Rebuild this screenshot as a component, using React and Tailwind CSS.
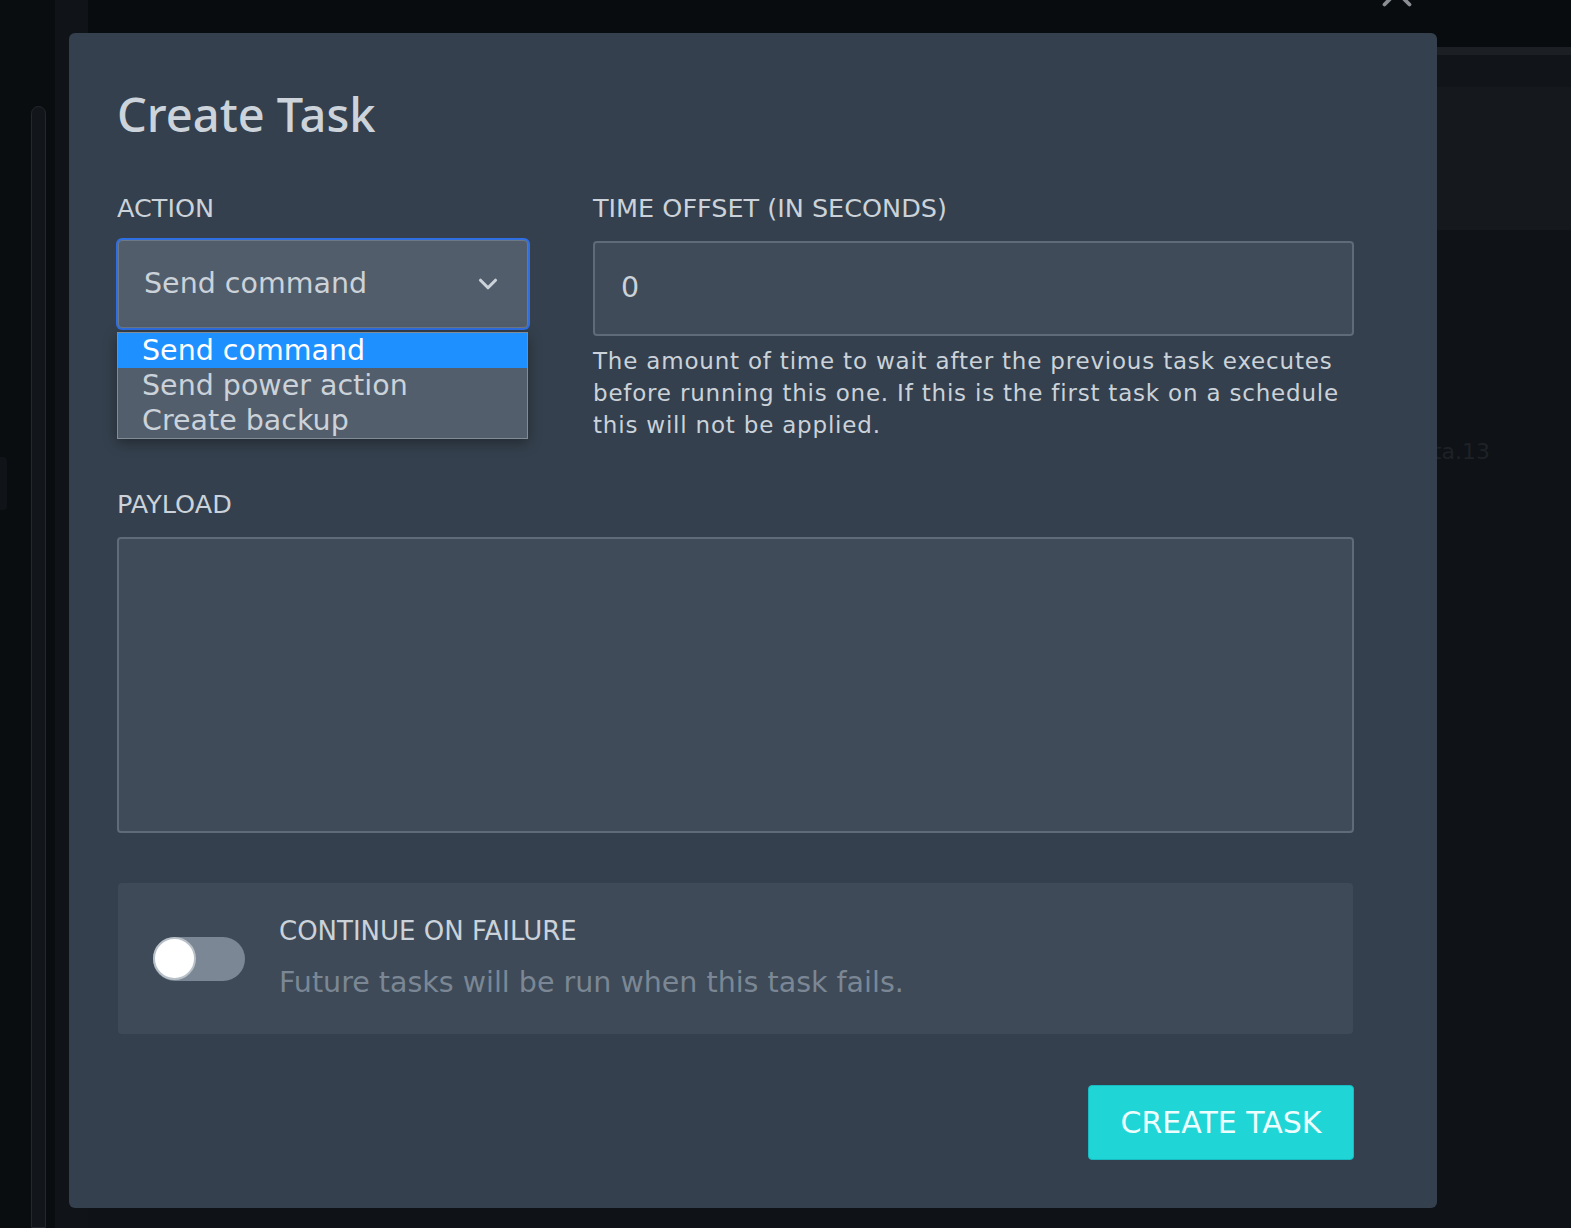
import React from 'react';
import { ChevronDown, X } from 'lucide-react';

const actions = ['Send command', 'Send power action', 'Create backup'];

const helpLines = [
  'The amount of time to wait after the previous task executes',
  'before running this one. If this is the first task on a schedule',
  'this will not be applied.',
];

const Label = ({ children }) => (
  <div className="h-[24px] text-[25.5px] leading-[24px] uppercase text-[#cbd2d9]">{children}</div>
);

export default function App() {
  return (
    <div className="relative h-[1228px] w-full overflow-hidden bg-[#0a0d10] font-['DejaVu_Sans',sans-serif]">
      {/* page behind the modal */}
      <div className="flex h-full">
        <div className="flex w-[55px] shrink-0">
          <div className="w-[7px] shrink-0 pt-[457px]">
            <div className="h-[53px] rounded-r-[4px] bg-[#101317]" />
          </div>
          <div className="ml-[24px] w-[15px] shrink-0 pt-[106px]">
            <div className="h-full rounded-t-full border border-[#24282d] bg-[#121519]" />
          </div>
        </div>
        <div className="w-[33px] shrink-0 bg-[#101317]" />
        <div className="flex flex-1 flex-col">
          <div className="h-[47px] bg-[#090c0f]" />
          <div className="h-[8px] bg-[#1c2025]" />
          <div className="h-[32px] bg-[#111418]" />
          <div className="h-[143px] bg-[#15181c]" />
          <div className="flex-1 bg-[#0f1216] pr-[81px] pt-[205px] text-right text-[22px] text-[#1e2227]">
            1.0.0-beta.13
          </div>
        </div>
      </div>

      {/* modal */}
      <div className="absolute left-[69px] top-[33px] flex h-[1175px] w-[1368px] flex-col rounded-[6px] bg-[#34404d] pl-[48px] pr-[83px] pt-[57px]">
        <button className="absolute -top-[66px] right-[15px] text-[#8a8f94]">
          <X size={50} strokeWidth={1.8} />
        </button>

        <h2 className="h-[48px] font-['Noto_Sans',sans-serif] text-[47px] font-medium leading-[48px] text-[#cdd3da]">
          Create Task
        </h2>

        <div className="mt-[58px] grid grid-cols-[412px_1fr] gap-x-[64px]">
          <div>
            <Label>Action</Label>
            <div className="relative mt-[20px]">
              <div className="mx-px mt-[2px] flex h-[88px] items-center justify-between rounded-[4px] border border-[#6d7884] bg-[#515d6b] pl-[25px] pr-[24px] ring-2 ring-[#2f6fe2]">
                <span className="text-[28.5px] text-[#cbd2d9]">Send command</span>
                <ChevronDown size={30} strokeWidth={2.5} className="text-[#cbd2d9]" />
              </div>
              <div className="absolute left-0 top-[92px] z-10 w-[411px] border border-[#828c97] bg-[#525e6c] shadow-[0_4px_12px_rgba(0,0,0,0.35)]">
                {actions.map((a, i) => (
                  <div
                    key={a}
                    className={
                      i === 0
                        ? 'h-[35px] bg-[#1e90ff] pl-[24px] text-[28.5px] leading-[35px] text-white'
                        : 'h-[35px] pl-[24px] text-[28.5px] leading-[35px] text-[#cbd2d9]'
                    }
                  >
                    {a}
                  </div>
                ))}
              </div>
            </div>
          </div>

          <div>
            <Label>Time Offset (in seconds)</Label>
            <div className="mt-[21px] flex h-[95px] items-center rounded-[4px] border-2 border-[#5f6b78] bg-[#3f4b58] px-[26px] text-[28.5px] text-[#cbd2d9]">
              0
            </div>
            <p className="mt-[9px] text-[23px] leading-[32px] tracking-[0.8px] text-[#cbd2d9]">
              {helpLines.map((l) => (
                <span key={l} className="block whitespace-nowrap">
                  {l}
                </span>
              ))}
            </p>
          </div>
        </div>

        <div className="mt-[51px]">
          <Label>Payload</Label>
        </div>
        <textarea className="mt-[21px] h-[296px] w-full resize-none rounded-[4px] border-2 border-[#5f6b78] bg-[#3f4b58] outline-none" />

        <div className="mx-px mt-[50px] flex h-[151px] items-center rounded-[4px] bg-[#3e4a58] pl-[35px]">
          <div className="flex h-[44px] w-[92px] shrink-0 items-center rounded-full bg-[#7b8794]">
            <div className="h-[43px] w-[43px] rounded-full border-2 border-[#b8c0c8] bg-white" />
          </div>
          <div className="ml-[34px]">
            <div className="h-[24px] text-[26px] leading-[24px] uppercase text-[#cbd2d9]">Continue on Failure</div>
            <div className="mt-[24px] text-[28.5px] leading-[32px] text-[#7b8794]">
              Future tasks will be run when this task fails.
            </div>
          </div>
        </div>

        <div className="mt-[51px] flex justify-end">
          <button className="h-[75px] w-[266px] rounded-[4px] border border-[#17bcc2] bg-[#1fd5d5] text-[30px] uppercase text-[#ecfeff]">
            Create Task
          </button>
        </div>
      </div>
    </div>
  );
}
